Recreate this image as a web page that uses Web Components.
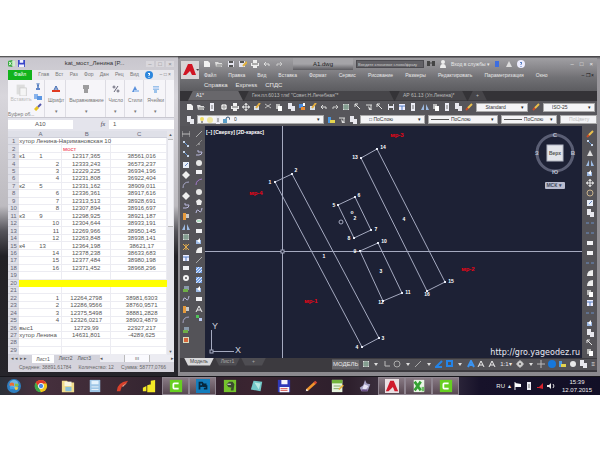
<!DOCTYPE html>
<html lang="ru">
<head>
<meta charset="utf-8">
<title>Desktop</title>
<style>
html,body{margin:0;background:#fff}
body{font-family:"Liberation Sans",Arial,sans-serif;min-height:100vh;display:flex;flex-direction:column;justify-content:center}
</style>
</head>
<body>
<desk-top>
  <sheet-window></sheet-window>
  <cad-window><cad-drawing></cad-drawing></cad-window>
  <task-bar slot="bar"></task-bar>
</desk-top>
<script>
const ICONS={
new:'<path d="M1 1h4l2 2v4H1z" fill="#f2f2f2"/>',
open:'<path d="M0 2h3l1 1h3v4H1z" fill="#ddd"/><path d="M1 7l1-3h6L6 7z" fill="#aaa"/>',
save:'<path d="M1 1h6v6H1z" fill="#e4e4ee"/><path d="M2 1h4v2H2zM2 5h4v2H2z" fill="#555"/>',
saveas:'<path d="M0 1h6v6H0z" fill="#e4e4ee"/><path d="M1 1h4v2H1z" fill="#555"/><path d="M4 6l4-4" stroke="#e2b23c" stroke-width="2"/>',
print:'<path d="M2 0h4v3H2zM0 3h8v3H0zM2 5h4v3H2z" fill="#eee"/><path d="M1 4h6" stroke="#666"/>',
zoom:'<circle cx="4" cy="4" r="3" fill="#eee"/><path d="M4 1v6M1 4h6" stroke="#999"/>',
undo:'<path d="M1 4h5v2M1 4l2-2M1 4l2 2" fill="none" stroke="#ddd"/>',
redo:'<path d="M7 4H2v2M7 4L5 2M7 4L5 6" fill="none" stroke="#ccc"/>',
sheet:'<path d="M1 0h4v6H1zM4 3h4v5H4z" fill="#e8e8ee"/>',
page:'<path d="M2 0h4v8H2z" fill="#ececf4"/><path d="M3 3h2M3 5h2" stroke="#777"/>',
cut:'<path d="M1 1l6 4M7 1L1 5" stroke="#bbb"/>',
copy:'<path d="M1 1h4v5H1z" fill="#bbb"/><path d="M3 3h4v5H3z" fill="#fff"/>',
paint:'<path d="M1 1h4v4H1z" fill="#4d8ee0"/><path d="M3 4h4v3H3z" fill="#e88a30"/><path d="M5 0h2v3H5z" fill="#fff"/>',
match:'<path d="M1 3h5v4H1z" fill="#d8dfe8"/><path d="M3 5l4-5" stroke="#e6b040" stroke-width="2"/>',
move:'<path d="M4 0v8M0 4h8" stroke="#e8e8e8"/><path d="M4 0l2 2H2zM4 8L2 6h4zM0 4l2-2v4zM8 4L6 6V2z" fill="#ddd"/>',
grid:'<path d="M1 1h6v6H1z" fill="#ddd"/><path d="M3 1v6M5 1v6M1 3h6M1 5h6" stroke="#687"/>',
table:'<path d="M1 1h6v6H1z" fill="#eef"/><path d="M1 3h6M4 3v4" stroke="#557fc4"/>',
arrow:'<path d="M1 1l5 5M1 1h3M1 1v3" fill="none" stroke="#e5e5e5"/>',
arrow2:'<path d="M1 2h6M6 2v5" fill="none" stroke="#ddd"/><path d="M3 3l4 4H4z" fill="#ddd"/>',
dim:'<path d="M0 4h8M0 1v6M8 1v6" stroke="#bbb"/>',
angle:'<path d="M1 1l6 6" stroke="#5892d8"/><path d="M1 1h2v2H1zM5 5h2v2H5z" fill="#c8d7ed"/>',
arc:'<path d="M1 7q0-6 6-6" fill="none" stroke="#a8a8c8"/>',
diam:'<path d="M4 0l4 4-4 4-4-4z" fill="#eee"/>',
circle:'<circle cx="4" cy="4" r="3" fill="#e8e8e8"/>',
ring:'<circle cx="4" cy="4" r="2" fill="none" stroke="#f4f4f4" stroke-width="2"/>',
cring:'<circle cx="4" cy="4" r="3" fill="none" stroke="#aaa"/>',
line:'<path d="M1 7l6-6" stroke="#aaa"/>',
xline:'<path d="M1 7l6-6" stroke="#888"/><path d="M3 5h2" stroke="#bbb"/>',
poly:'<path d="M1 6h3q3 0 3-3H3V1" fill="none" stroke="#b9b9dd"/>',
poly2:'<path d="M4 1l3 2-1 4H2L1 3z" fill="#eee"/>',
rect:'<path d="M1 2h6v4H1z" fill="#f1f1f4"/>',
purple:'<path d="M1 7q0-5 6-6" fill="none" stroke="#a177c8"/>',
spline:'<path d="M1 6q1-5 3-2t3-3" fill="none" stroke="#bcbce0"/>',
ell:'<ellipse cx="4" cy="4" rx="3" ry="2" fill="#eee"/><path d="M2 4h4" stroke="#7c9"/>',
block:'<path d="M1 3h5v4H1z" fill="#9fbbe6"/><path d="M5 1v5l-3-2z" fill="#fff"/>',
hatch:'<path d="M1 1h6v6H1z" fill="#79a4e6"/><path d="M1 4l3-3M1 7l6-6M4 7l3-3" stroke="#dfeaff"/>',
letter:'<path d="M1 7l3-6 3 6M2 5h4" fill="none" stroke="#eee"/>',
multi:'<path d="M1 1h3v3H1z" fill="#4fc45a"/><path d="M4 4h3v3H4z" fill="#b8c8f0"/>',
orange:'<path d="M1 1h3v7H1z" fill="#e59a3c"/><path d="M4 2h3v4H4z" fill="#c9c9c9"/>',
star:'<path d="M1 1l6 6M7 1L1 7M4 1v6" stroke="#e4ad4c"/>',
green:'<path d="M2 1h5v4H2z" fill="#89a"/><path d="M1 4h5v3H1z" fill="#6fae47"/>',
red:'<path d="M1 1h6v6H1z" fill="#ddb"/><path d="M2 2h4v4H2z" fill="#d9663a"/>',
brush:'<path d="M1 7l3-3" stroke="#c84e2a" stroke-width="2"/><path d="M3 5l4-4" stroke="#e9c04d" stroke-width="2"/>',
tri:'<path d="M4 1l3 6H1z" fill="#ddd"/>',
mirror:'<path d="M3 1v6H0zM5 1v6h3z" fill="#9dbbe3"/>',
scale:'<path d="M1 1h6v6H1z" fill="#e9eef8"/><path d="M3 5l3-3" stroke="#6386c2"/>',
rot:'<circle cx="4" cy="4" r="3" fill="none" stroke="#c9b28b"/>',
dash:'<path d="M0 4h3M5 4h3" stroke="#6b8fc4"/>',
fillet:'<path d="M1 7q0-6 6-6v6z" fill="#eee"/>',
bluesq:'<path d="M1 1h5v5H1z" fill="none" stroke="#2484e8" stroke-width="2"/>',
blueang:'<path d="M7 1L1 7h6" fill="none" stroke="#2484e8" stroke-width="2"/>',
blueman:'<path d="M1 7l3-6 3 6M3 5h3" fill="none" stroke="#3a94f2" stroke-width="2"/>',
bluedot:'<circle cx="4" cy="4" r="4" fill="#1678dc"/>',
plus:'<path d="M4 0v8M0 4h8" stroke="#bbb"/>',
corner:'<path d="M2 1v5h5" fill="none" stroke="#bbb"/>',
drop:'<path d="M2 3h4L4 6z" fill="#ddd"/>',
gear:'<circle cx="4" cy="4" r="3" fill="#ccc"/><path d="M4 0v8M0 4h8" stroke="#ccc"/><circle cx="4" cy="4" r="1" fill="#555"/>',
layers:'<path d="M1 1h3v6H1z" fill="#4c9be4"/><path d="M3 4h5v3H3z" fill="#e4d44d"/>',
bulb:'<circle cx="4" cy="3" r="2" fill="#f0dc62"/><path d="M3 5h2v2H3z" fill="#999"/>',
sun:'<circle cx="4" cy="4" r="3" fill="#efe6a0"/>',
lock:'<path d="M1 3h4v4H1z" fill="#5b9fc7"/><path d="M4 3q0-2 2-2t2 3" fill="none" stroke="#357"/>',
user:'<circle cx="4" cy="2" r="2" fill="#eee"/><path d="M1 8q0-4 3-4t3 4z" fill="#eee"/>',
bin:'<path d="M0 1h3v5H0zM5 1h3v5H5z" fill="#444"/><path d="M3 3h2" stroke="#444"/>',
help:'<circle cx="4" cy="4" r="4" fill="#2c86dd"/><path d="M3 3q1-2 2 0L4 4v1M4 6v1" fill="none" stroke="#fff"/>',
helpw:'<circle cx="4" cy="4" r="4" fill="#eef"/><path d="M3 3q1-2 2 0L4 4v1M4 6v1" fill="none" stroke="#557fc4"/>',
blue:'<path d="M2 1h4v6H2z" fill="#3d6ee0"/>',
xcl:'<path d="M0 1l5-1v8l-5-1z" fill="#34a83c"/><path d="M5 1h3v6H5z" fill="#cfeecb"/><path d="M1 2l3 4M4 2L1 6" stroke="#fff"/>',
floppy:'<path d="M0 0h8v8H0z" fill="#3845c8"/><path d="M2 0h4v3H2zM1 5h6v3H1z" fill="#f2f2ff"/>',
clip:'<path d="M1 1h5v6H1z" fill="#ddd"/><path d="M3 3h4v5H3z" fill="#f5f5f5" stroke="#ccc" stroke-width=".5"/>',
scis:'<path d="M3 0l1 5M5 0L4 5" stroke="#567fc0"/><circle cx="3" cy="6" r="1" fill="#2e60b8"/><circle cx="5" cy="6" r="1" fill="#2e60b8"/>',
cpy:'<path d="M0 1h4v5H0z" fill="#8ab4ec"/><path d="M3 3h5v4H3z" fill="#5b96e2"/>',
bru:'<path d="M1 7l3-3" stroke="#e8c21f" stroke-width="3"/><path d="M4 4l3-3" stroke="#55a" stroke-width="2"/>',
afont:'<path d="M2 5l2-4 2 4M3 4h2" fill="none" stroke="#3a66b0"/><path d="M0 5h8v2H0z" fill="#e03a22"/>',
align:'<path d="M1 1h6M1 3h6M2 5h4M2 7h4" stroke="#444"/>',
pct:'<path d="M2 7l4-6" stroke="#667"/><circle cx="2" cy="2" r="1" fill="none" stroke="#667"/><circle cx="6" cy="6" r="1" fill="none" stroke="#667"/>',
style:'<path d="M1 7l3-6 3 6z" fill="#5a90dc"/><path d="M3 5h5v2H3z" fill="#a9c8f0"/>',
cells:'<path d="M1 1h6v4H1zM2 4h3v4H2z" fill="#9cc2ea"/><path d="M1 3h6" stroke="#eef"/>',
orb:'<circle cx="8" cy="8" r="8" fill="#2f7fc0"/><circle cx="8" cy="6" r="5" fill="#6fb6e2"/><path d="M3 5q3-2 5 0v3q-2-1-5 0z" fill="#ec6b35"/><path d="M9 5q2 1 4 0v3q-2 1-4 0z" fill="#86c440"/><path d="M3 9q3-1 5 0v3q-2-1-4 0z" fill="#3fa0ea"/><path d="M9 9q2 1 4 0l-1 3q-1 1-3 0z" fill="#f4cf3c"/>',
chrome:'<circle cx="8" cy="8" r="7" fill="#f2c81c"/><path d="M2 4a7 7 0 0 1 12 1H8L5 9z" fill="#e0382c"/><path d="M2 4l4 7 2 4A7 7 0 0 1 2 4z" fill="#3da84a"/><circle cx="8" cy="8" r="3" fill="#4b87e4" stroke="#fff"/>',
folder:'<path d="M1 2h6l1 2h7v11H1z" fill="#f1dd8c"/><path d="M4 3h8v5H4z" fill="#f8f5dd"/><path d="M5 9h7v5H5z" fill="#8ac2d8"/>',
calc:'<path d="M2 1h12v14H2z" fill="#9fc6e6"/><path d="M4 2h8v4H4z" fill="#e4f2fc"/><path d="M4 9h8M4 12h8" stroke="#edf6fc"/>',
redapp:'<path d="M2 14Q2 4 15 2l-3 4-4 2-2 6z" fill="#d8402b"/><path d="M8 8l6-4-5 5z" fill="#f0a58d"/>',
chart:'<path d="M1 10l4-2v6H1zM6 7l4-1v9H6zM10 2l5-1v14h-5z" fill="#f4e926"/>',
cam:'<path d="M1 1h14v14H1z" fill="#66cf20"/><path d="M11 5H6q-1 0-1 1v4q0 1 1 1h5" fill="none" stroke="#fff" stroke-width="2"/>',
ps:'<path d="M0 0h16v16H0z" fill="#137dbd"/><path d="M4 12V4h3q2 2 0 4H4M12 6H9v2h3v3H9" fill="none" stroke="#06283f" stroke-width="2"/>',
ever:'<path d="M1 1h14v14H1z" fill="#74c32c"/><path d="M4 6l3-3h4l2 3-1 7H9v-2l1-1-4-1z" fill="#3c4b30"/><path d="M5 6h4" stroke="#fff"/>',
note:'<path d="M4 2l10 1-2 11-11-2z" fill="#72c8c8"/><path d="M5 4l7 1-2 7" fill="#b9e9e3"/>',
fl16:'<path d="M1 1h14v14H1z" fill="#3039b8"/><path d="M5 1h7v5H5zM3 9h11v6H3z" fill="#f6f6fd"/><path d="M4 11h8M4 13h8" stroke="#d3463e"/>',
pencil:'<path d="M3 13L13 4" stroke="#f0952c" stroke-width="3"/><path d="M2 14l3-1-2-2z" fill="#eee"/><path d="M12 5l2-2" stroke="#d24a36" stroke-width="3"/>',
list:'<path d="M1 1h12v14H1z" fill="#e6f3dd"/><path d="M1 1h12v4H1z" fill="#72b53c"/><path d="M3 8h8M3 11h7" stroke="#7aa75a"/><path d="M9 12l5-5" stroke="#e9b33f" stroke-width="2"/>',
bird:'<path d="M8 1l2 4 4 1-3 8H4l-2-4 4-3z" fill="#a5a0c4"/><path d="M7 6l5 2-3 4-4-1z" fill="#e8e4f5"/><path d="M4 13h7" stroke="#6a4f86" stroke-width="2"/>',
acad:'<path d="M0 0h16v16H0z" fill="#e9dfe2"/><path d="M1 14L6 2h4l5 12h-4l-2-5-5 5z" fill="#cf1a2c"/>',
xl16:'<path d="M2 1h12v14H2z" fill="#eaf6e6"/><path d="M3 3l7 10M10 3L3 13" stroke="#35a234" stroke-width="3"/><path d="M11 9h3v5h-3z" fill="#6bbd62"/>',
flag:'<path d="M1 0v8" stroke="#eee"/><path d="M1 1l6 1v3H1z" fill="#fff"/>',
mute:'<path d="M1 5h2l4-4v6L3 6H1z" fill="#d8222c"/>',
snd:'<path d="M0 3h2l2-2v6L2 5H0z" fill="#eee"/><path d="M6 2q2 2 0 4" fill="none" stroke="#ddd"/>',
logo:'<path d="M0 0h18v18H0z" fill="#d9d5d6"/><path d="M2 14L7 3h4l4 11h-4l-2-4-4 4z" fill="#d01523"/><path d="M15 8h3l-1 2z" fill="#444"/>'
};
const BIG={orb:16,chrome:16,folder:16,calc:16,redapp:16,chart:16,cam:16,ps:16,ever:16,note:16,fl16:16,pencil:16,list:16,bird:16,acad:16,xl16:16,logo:18};
customElements.define('ui-icon',class extends HTMLElement{
 constructor(){super();this.attachShadow({mode:'open'})}
 connectedCallback(){const n=this.getAttribute('name'),v=BIG[n]||8;
  this.shadowRoot.innerHTML=`<style>:host{display:block;width:8px;height:8px;flex:none}svg{display:block;width:100%;height:100%}</style><svg viewBox="0 0 ${v} ${v}" aria-hidden="true">${ICONS[n]}</svg>`}
});
const ic=s=>s.split(' ').map(n=>`<ui-icon name="${n}"></ui-icon>`).join('');
const btns=s=>s.split(' ').map(n=>`<button aria-label="${n}"><ui-icon name="${n}"></ui-icon></button>`).join('');
const RESET='button,select,input{font:inherit;color:inherit;margin:0;padding:0;border:0;background:none;border-radius:0;min-width:0}button{display:block;flex:none}';
const define=(tag,html)=>{const t=document.createElement('template');t.innerHTML=html;
 customElements.define(tag,class extends HTMLElement{constructor(){super();this.attachShadow({mode:'open'}).append(t.content.cloneNode(true))}})};

define('desk-top',`<style>
:host{display:block;background:#242329}
.wins{display:grid;grid-template-columns:178fr 422fr}
</style><div class="wins"><slot></slot></div><slot name="bar"></slot>`);

const rows=[
['<span class="wide">хутор Ленина-Наримановская 10</span>','',''],
['','<span class="red">мост</span>',''],
['к1|1','12317,365','38561,016'],['2','12333,243','36573,237'],['3','12229,225','36934,196'],['4','12231,808','36922,404'],
['к2|5','12331,162','38909,011'],['6','12336,361','38917,616'],['7','12313,513','38928,691'],['8','12307,894','38916,697'],
['к3|9','12298,925','38921,187'],['10','12304,644','38933,191'],['11','12269,966','38950,145'],['12','12263,848','38938,141'],
['к4|13','12364,198','38621,17'],['14','12378,238','38633,683'],['15','12377,484','38980,198'],['16','12371,452','38968,296'],
['','',''],['','','','y'],['','',''],
['1','12264,2798','38981,6303'],['2','12286,9566','38760,9571'],['3','12375,5498','38881,2828'],['4','12326,0217','38903,4879'],
['<span>выс1</span>','12729,99','22927,217'],['<span>хутор Ленина</span>','14631,801','-4289,625'],['','',''],['','','']];
const body=rows.map((r,i)=>{let a=r[0],c='';if(a.includes('|')){const p=a.split('|');a=`<div class="two"><span>${p[0]}</span><span>${p[1]}</span></div>`}else if(/^\d+$/.test(a))c=' class="r"';
 return `<tr${r[3]?' class="y"':''}><th>${i+1}</th><td${c}>${a}</td><td class="c">${r[1]}</td><td class="c">${r[2]}</td></tr>`}).join('');
define('sheet-window',`<style>${RESET}
:host{display:flex;flex-direction:column;box-sizing:border-box;padding:2px 4px 4px 8px;font-size:6px;line-height:7px;color:#555;min-width:0;
 background:linear-gradient(#333 0,#c9c7ce 2px,#d8d6dc 40px,#bdbbc0 150px,#55545a 175px,#222126 200px,#26252b 100%)}
.title{display:flex;align-items:center;height:12px;gap:3px;color:#333}
.title b{flex:1;text-align:center;font-weight:400;padding-left:18px}
.title ui-icon{width:7px;height:7px}
.wc{display:flex;gap:2px;width:28px}.wc button{width:8px;height:6px;background:#d9d7dc;line-height:6px;color:#888}
.tabs{display:flex;height:10px;align-items:center;background:#e9e8ed;justify-content:space-between;padding-right:3px;font-size:5px;color:#777}
.tabs .f{background:#12b31c;color:#fff;width:24px;height:10px}
.rib{display:flex;height:38px;background:#f6f5f9;justify-content:space-between;padding-right:8px;border-bottom:1px solid #c8c7d0;box-sizing:border-box;font-size:5px;color:#777}
.g{display:flex;flex-direction:column;align-items:center;padding-top:5px;gap:4px;border-right:1px solid #dddce3;padding-right:1px}
.clip{display:grid;grid-template-columns:26px 10px;padding:3px 0 0;gap:0;border-right:1px solid #dddce3}
.clip .p{display:flex;flex-direction:column;align-items:center;color:#bbb}.p ui-icon{width:13px;height:13px}
.clip .s{display:flex;flex-direction:column;gap:2px}
.clip .l{grid-column:1/3}
.fx{display:flex;height:13px;background:#e4e4ec;align-items:center}
.fx input{height:9px;background:#fff;text-align:center;color:#555}
.fx .n{flex:68}.fx i{flex:34;text-align:right;font-family:"Liberation Serif",serif;padding-right:4px;color:#334}.fx .v{flex:64;text-align:left;padding-left:4px}
.grid{display:flex;height:224px;background:#fff}
table{border-collapse:separate;border-spacing:0;table-layout:fixed;flex:1;height:224px;min-width:0}
td,th{padding:0;font-weight:400;white-space:nowrap;line-height:6px}
td{border:0 solid #ececf2;border-width:0 1px 1px 0}
th{background:#dfe0e8;color:#667;border-bottom:1px solid #cfd0da}
td.r{text-align:right;padding-right:2px}.c{text-align:center}td:last-child{padding-left:6px}
.two{display:grid;grid-template-columns:20px 1fr}
.red{color:#f0304c;display:block;text-align:left;padding-left:1px}
.y td{background:#ff0;border-color:#ff0}
.wide{display:block;width:0;overflow:visible}
.sb{width:7px;background:#e6e6ec;display:flex;flex-direction:column;justify-content:space-between;text-align:center;font-size:4px}
.sb div{flex:1;margin:1px;border:0 solid #bbb;border-width:1px 0;max-height:86px;background:#f6f6fa}
.sb .dn{margin-top:auto}
.st{display:flex;height:8px;background:#d3d3dc;align-items:center;gap:5px;font-size:5px;padding-left:3px}
.st button.on{background:#fff;padding:0 4px;line-height:8px}
.hs{flex:1;display:flex;justify-content:space-between;background:#ececf2;margin-left:4px}
.hs span:nth-child(2){background:#fafafe;border:0 solid #bbb;border-width:0 1px;width:24px;text-align:center}
.stat{display:flex;justify-content:space-between;height:9px;line-height:9px;background:#d5d3dc;padding:0 8px 0 11px;font-size:5px;white-space:nowrap;color:#666}
</style>
<div class="title">${ic('xcl floppy')}<b>kat_мост_Ленина [Р...</b><div class="wc"><button>–</button><button>□</button><button>×</button></div></div>
<div class="tabs"><button class="f">Файл</button><button>Глав</button><button>Вст</button><button>Раз</button><button>Фор</button><button>Дан</button><button>Рец</button><button>Вид</button><button aria-label="help"><ui-icon name="help"></ui-icon></button><button>– □ ×</button></div>
<div class="rib"><div class="clip"><button class="p"><ui-icon name="clip"></ui-icon>Вставить</button><div class="s">${ic('scis cpy bru')}</div><span class="l">Буфер об...</span></div>
${[['afont','Шрифт'],['align','Выравнивание'],['pct','Число'],['style','Стили'],['cells','Ячейки']].map(a=>`<button class="g">${ic(a[0])}<span>${a[1]}</span><span>▾</span></button>`).join('')}</div>
<div class="fx"><input class="n" aria-label="Имя" value="A10"><i>fx</i><input class="v" aria-label="Формула" value="1"></div>
<div class="grid"><table><colgroup><col style="width:7%"><col style="width:27%"><col style="width:31%"><col style="width:35%"></colgroup><tr><th></th><th>A</th><th>B</th><th>C</th></tr>${body}</table><div class="sb"><span>▲</span><div></div><span class="dn">▼</span></div></div>
<div class="st"><span>◂ ◂ ▸ ▸</span><button class="on">Лист1</button><button>Лист2</button><button>Лист3</button><div class="hs"><span>◂</span><span>ııı</span><span>▸</span></div></div>
<div class="stat"><span>Среднее: 38891,61784</span><span>Количество: 12</span><span>Сумма: 58777,0766</span></div>`);

define('cad-window',`<style>${RESET}
:host{display:flex;flex-direction:column;box-sizing:border-box;padding:2px 3px 3px 2px;background:linear-gradient(#3a393c 0,#99979c 3px,#8b898e 100%);font-size:6px;line-height:7px;color:#e8e8e8;min-width:0}
.head{display:grid;grid-template-columns:20px 1fr;background:linear-gradient(#a09fa3 0,#858488 12px,#707074 20px,#5c5c60 100%);height:33px}
.head>button{margin:3px 0 0 1px;align-self:start}.head>button ui-icon{width:18px;height:18px}
.hr{display:flex;flex-direction:column;min-width:0}
.t{display:flex;align-items:center;height:13px;gap:3px;padding-left:3px}
.t .nm{flex:1;text-align:center;color:#222;background:linear-gradient(#a5a4a8 50%,#5c5b60);height:12px;line-height:12px;margin-left:6px}
.t input{background:#626166;width:68px;height:8px;font-size:4px;color:#ccc;border:1px solid #4c4b50;box-sizing:border-box;padding:0 1px}
.t ui-icon{margin-right:1px}
.t .in{font-size:5px}
.t .wc{display:flex;gap:6px;width:64px;justify-content:flex-end;color:#eee;padding-right:4px}
.m{display:flex;height:10px;align-items:center;justify-content:space-between;padding:0 3px 0 4px;font-size:5px;white-space:nowrap}
.m .mdi{color:#111;padding-left:22px}.m2{justify-content:flex-start;gap:8px;font-size:6px}
.tabs{display:flex;height:10px;background:#343337;padding-left:8px;font-size:5px;white-space:nowrap;gap:1px;color:#bbb}
.tabs button{background:#464549;clip-path:polygon(5px 0,calc(100% - 5px) 0,100% 100%,0 100%);padding:0 8px;text-align:left;height:10px}
.tabs .a{background:#68676b;color:#eee;width:55px}.tabs .g{width:150px}.tabs .k{width:72px}
.bar{display:flex;height:13px;align-items:center;background:#57565b;justify-content:space-between;gap:2px;padding:0 2px 0 6px}
.bar2{height:12px;gap:3px;padding-right:0}
.cb{display:flex;align-items:center;background:#f4f4f6;color:#333;height:9px;position:relative;min-width:0;box-sizing:border-box;border:1px solid #aaa;font-size:5px}
.cb select{appearance:none;flex:1;height:7px;padding-left:8px;outline:0}
.cb.k select{padding-left:22px}.cb::after{content:"▾";color:#222;width:6px;line-height:7px}
.cb.k::before{content:"";border-top:1px solid #555;width:18px;position:absolute;left:2px;top:3px}
.off{color:#aaa}.off::after{content:""}
.work{display:grid;grid-template-columns:12px 13px 1fr 15px;height:232px;background:#545358}
.v{display:flex;flex-direction:column;justify-content:space-between;align-items:center;padding:4px 0 13px}
.v.b{padding-bottom:35px}.v.c{padding-bottom:1px}
.foot{display:flex;height:14px;background:#3c3a3f;align-items:center;padding-left:4px;gap:1px;font-size:5px}
.foot .lt{background:#4e4d52;color:#aaa;clip-path:polygon(0 0,100% 0,calc(100% - 4px) 100%,4px 100%);height:8px;width:25px;align-self:flex-start}
.foot .on{background:#d8d8da;color:#444;width:30px}
.foot .s{display:flex;align-items:center;justify-content:space-between;background:#545358;flex:0 0 265px;height:11px;margin-left:auto;gap:1px;align-self:flex-start;margin-top:1px;font-size:6px}
.s>span{padding:0 2px}.s button.m0{background:#68676b;height:9px;padding:0 1px}
</style>
<div class="head"><button aria-label="Меню"><ui-icon name="logo"></ui-icon></button><div class="hr">
<div class="t">${ic('new open save saveas print undo redo')}<span class="nm">A1.dwg</span><input aria-label="Поиск" value="Введите ключевое слово/фразу">${ic('bin user')}<span class="in">Вход в службы ▾</span>${ic('blue tri helpw')}<span class="wc"><button>–</button><button>□</button><button>×</button></span></div>
<div class="m">${'Файл Правка Вид Вставка Формат Сервис Рисование Размеры Редактировать Параметризация Окно'.split(' ').map(x=>`<button>${x}</button>`).join('')}<span class="mdi">– ❐ ×</span></div>
<div class="m m2"><button>Справка</button><button>Express</button><button>СПДС</button></div></div></div>
<div class="tabs"><button class="a">А1*</button><button class="g">Ген.пл.6013 тлкf "Совет.Н.Лечебная"*</button><button class="k">АР 61.13 (Ул.Ленина)*</button><button>+</button></div>
<div class="bar">${btns('new open page zoom print move match cut copy sheet paint match undo redo grid arrow arrow2 arrow')}${btns('save table page mirror copy page sheet brush')}<label class="cb" style="flex:0 0 52px"><select aria-label="Стиль текста"><option>Standard</option></select></label>${btns('brush')}<label class="cb" style="flex:0 0 52px"><select aria-label="Размерный стиль"><option>ISO-25</option></select></label></div>
<div class="bar bar2">${btns('sheet')}<label class="cb" style="flex:129">${ic('bulb sun page lock')}<select aria-label="Слой" style="padding-left:4px"><option>0</option></select></label>${btns('layers arrow2 sheet')}<label class="cb" style="flex:65"><select aria-label="Цвет"><option>□ ПоСлою</option></select></label><label class="cb k" style="flex:70"><select aria-label="Тип линий"><option>ПоСлою</option></select></label><label class="cb k" style="flex:56"><select aria-label="Вес линий"><option>ПоСлою</option></select></label><label class="cb off" style="flex:36"><select disabled aria-label="Печать"><option>ПоЦвету</option></select></label></div>
<div class="work"><div class="v">${ic('dim angle angle scale diam arc diam poly orange mirror grid star table rect ring green spline orange arc green red')}</div>
<div class="v b">${ic('line xline poly circle rect purple circle poly2 spline ell rect block fillet line hatch hatch block rect letter multi')}</div>
<slot></slot>
<div class="v c">${ic('brush angle tri mirror block move rot scale sheet dash dash rect rect dash fillet fillet copy table dash block sheet arrow copy')}</div></div>
<div class="foot"><button class="lt on">Модель</button><button class="lt">Лист1</button><button class="lt">+</button><div class="s"><button class="m0">МОДЕЛЬ</button>${ic('grid drop corner cring drop line drop blueang bluesq drop blueman letter letter')}<span>1:1▾</span>${ic('gear drop plus bluedot layers circle sheet')}<span>≡</span></div></div>`);

const quad=p=>`<polygon points="${p}" fill="none"/>`+p.split(' ').map(q=>{const[x,y]=q.split(',');return `<rect x="${x-1}" y="${y-1}" width="2" height="2" fill="#e8ebf5" stroke="none"/>`}).join('');
const tx=(x,y,s)=>`<text x="${x}" y="${y}">${s}</text>`;
define('cad-drawing',`<style>
:host{display:block;min-width:0;background:#1d2135;overflow:hidden}
svg{display:block;width:100%;height:100%}
text{font:bold 5px "Liberation Sans",sans-serif;fill:#fff;stroke:none;text-anchor:middle}
.red text{fill:#f00414;font-size:6px}
text.n{font-size:5px;font-weight:700;text-anchor:start}
.u text{font:9px "Liberation Sans",sans-serif;fill:#cdd1de}
text.w{font:8px "DejaVu Sans",sans-serif;text-anchor:end;fill:#e9ebf3}
text.cube{fill:#bcc0d0;font-size:6px}
</style><svg viewBox="205 126 377 232" preserveAspectRatio="xMinYMin slice" stroke="#a5aac0" stroke-width="1">
<path d="M282.500 126v232M205 251.500h377"/><rect x="281" y="250" width="3" height="3" fill="#1d2135"/>
${quad('275,182 292,174 379,338 362,347')}${quad('361,158 377,149 445,282 427,291')}${quad('338,205 355,197 371,230 354,238')}${quad('360,251 378,243 402,293 383,301')}
${tx(270,184,'1')}${tx(296,172,'2')}${tx(383,340,'3')}${tx(357,349,'4')}
${tx(334,207,'5')}${tx(359,197,'6')}${tx(376,231,'7')}${tx(349,240,'8')}
${tx(355,159,'13')}${tx(383,149,'14')}${tx(451,283,'15')}${tx(427,296,'16')}
${tx(355,253,'9')}${tx(384,243,'10')}${tx(408,294,'11')}${tx(381,304,'12')}
${tx(324,258,'1')}${tx(404,221,'4')}${tx(381,273,'3')}${tx(355,220,'2')}${tx(352,214,'о')}
<circle cx="341" cy="222" r="2" fill="none"/>
<g class="red">${tx(256,195,'мр-4')}${tx(397,137,'мр-3')}${tx(311,303,'мр-1')}${tx(468,271,'мр-2')}</g>
<g class="u"><path d="M211.500 330v21.500H234" fill="none"/><rect x="210" y="350" width="3" height="3" fill="#1d2135"/>${tx(215,329,'Y')}${tx(238,353,'X')}</g>
<text class="n" x="206" y="134">[–] [Сверху] [2D-каркас]</text>
<circle cx="555" cy="153" r="18" fill="none" stroke="#5a5e74" stroke-width="3"/>
<rect x="547" y="145" width="16" height="16" fill="#e3e5ea" stroke="#b4b8c5"/><text x="555" y="155" style="fill:#555">Верх</text>
<text class="cube" x="555" y="137">С</text><text class="cube" x="555" y="174">Ю</text><text class="cube" x="537" y="155">З</text><text class="cube" x="573" y="155">В</text>
<rect x="545" y="182" width="20" height="7" rx="1" fill="#b9bccf" stroke="none"/><text x="554" y="187" style="fill:#444a60">МСК ▾</text>
<text class="w" x="580" y="355">http://gro.yageodez.ru</text>
</svg>`);

define('task-bar',`<style>${RESET}
:host{display:flex;height:19px;align-items:stretch;color:#eee;font-size:6px;line-height:8px;
 background:linear-gradient(90deg,#2b3038 0,#46303e 6%,#3d2a35 18%,#2f222f 30%,#3a2430 42%,#2d1f2c 58%,#4c4352 70%,#17122a 80%,#120f26 100%);border-top:1px solid #17161b;box-sizing:border-box}
button{width:27px;display:flex;justify-content:center;align-items:center}
button.a{background:linear-gradient(#8b7d87,#55454f);box-shadow:inset 0 0 0 1px #8f8590}
button ui-icon{width:14px;height:14px}button:first-child ui-icon{width:17px;height:17px}
.tray{margin-left:auto;display:flex;align-items:center;gap:3px;padding-right:8px;text-align:center}
.tray div{margin-left:4px}
</style>${'orb chrome folder calc redapp chart *cam *ps ever note fl16 pencil list bird *acad *xl16 *cam'.split(' ').map(n=>{const a=n[0]=='*';n=n.replace('*','');return `<button aria-label="${n}"${a?' class="a"':''}><ui-icon name="${n}"></ui-icon></button>`}).join('')}
<div class="tray"><span>RU</span><span>▴</span>${ic('flag page mute snd')}<div>15:39<br>12.07.2015</div></div>`);
</script>
</body>
</html>
